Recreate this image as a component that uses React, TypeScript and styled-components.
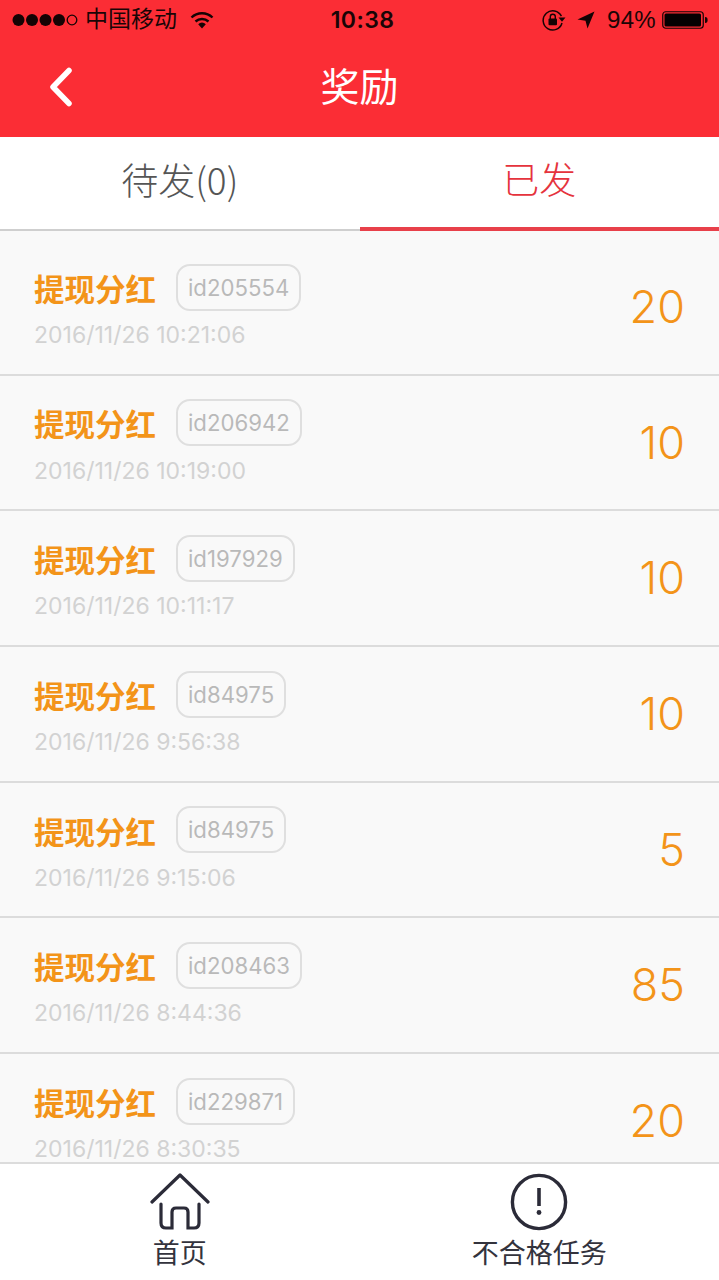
import React from "react";
import styled, { createGlobalStyle } from "styled-components";

const Global = createGlobalStyle`
  html, body { margin: 0; padding: 0; background: #fff; }
  body { font-family: "Liberation Sans", "Noto Sans CJK SC", sans-serif; }
  * { box-sizing: border-box; }
`;

const Page = styled.div`
  width: 719px;
  height: 1280px;
  display: flex;
  flex-direction: column;
  overflow: hidden;
  background: #fff;
`;
const Header = styled.header`
  height: 137px;
  flex: none;
  background: #fb2d35;
  display: flex;
  flex-direction: column;
`;
const StatusBar = styled.div`
  height: 40px;
  display: grid;
  grid-template-columns: 1fr auto 1fr;
  align-items: center;
  padding: 0 12px;
  color: #1a0506;
  font-size: 24px;
`;
const StatusLeft = styled.div`
  display: flex;
  align-items: center;
`;
const Carrier = styled.span`
  margin-left: 7px;
  font-size: 23px;
  line-height: 1;
  position: relative;
  top: -1px;
`;
const Clock = styled.span`
  font-family: "Inter", sans-serif;
  font-size: 23px;
  font-weight: 600;
  letter-spacing: 0.4px;
  margin-left: 6px;
`;
const StatusRight = styled.div`
  display: flex;
  align-items: center;
  justify-content: flex-end;
  gap: 11px;
  margin-right: -1px;
`;
const Percent = styled.span`
  font-size: 24px;
  letter-spacing: 0.3px;
  margin-left: 1px;
  margin-right: -5px;
`;
const NavBar = styled.div`
  flex: 1;
  display: grid;
  grid-template-columns: 1fr auto 1fr;
  align-items: center;
  padding: 0 48px 3px 48px;
`;
const Title = styled.h1`
  margin: 0;
  font-size: 39px;
  font-weight: 400;
  color: #fff;
  line-height: 1;
`;
const Tabs = styled.div`
  height: 94px;
  flex: none;
  display: grid;
  grid-template-columns: 1fr 1fr;
  background: #fff;
`;
const Tab = styled.div<{ $active?: boolean }>`
  display: flex;
  align-items: center;
  justify-content: center;
  padding-bottom: 9px;
  font-family: "Noto Sans CJK SC", sans-serif;
  font-size: 37px;
  font-weight: 300;
  color: ${(p) => (p.$active ? "#e5333d" : "#555")};
  border-bottom: ${(p) => (p.$active ? "4px solid #e8404a" : "2px solid #cfcfcf")};
`;
const List = styled.div`
  flex: 1;
  min-height: 0;
  overflow: hidden;
  background: #f9f9f9;
  padding-top: 9px;
`;
const Row = styled.div`
  height: 135.7px;
  display: flex;
  align-items: flex-start;
  justify-content: space-between;
  padding: 23px 35px 0 34px;
  border-bottom: 2px solid #dcdcdc;
`;
const RowMain = styled.div`
  display: flex;
  flex-direction: column;
`;
const RowTop = styled.div`
  display: flex;
  align-items: center;
  gap: 20px;
  height: 48px;
`;
const RowTitle = styled.span`
  font-size: 30.5px;
  font-weight: 700;
  color: #f39419;
  line-height: 1;
  position: relative;
  top: 3px;
`;
const Tag = styled.span`
  height: 47px;
  padding: 0 10px;
  display: flex;
  align-items: center;
  border: 2px solid #dfdfdf;
  border-radius: 14px;
  font-family: "Inter", sans-serif;
  font-size: 22.2px;
  color: #b9b9b9;
`;
const DateText = styled.div`
  margin-top: 10px;
  font-family: "Inter", sans-serif;
  font-size: 23px;
  line-height: 28px;
  color: #d2d2d2;
`;
const Amount = styled.div`
  font-family: "Inter", sans-serif;
  font-size: 45px;
  font-weight: 300;
  line-height: 1;
  margin-top: 21px;
  margin-right: -1px;
  color: #f39419;
`;
const TabBar = styled.nav`
  height: 118px;
  flex: none;
  display: grid;
  grid-template-columns: 1fr 1fr;
  background: #fff;
  border-top: 2px solid #dcdcdc;
`;
const TabItem = styled.div`
  display: flex;
  flex-direction: column;
  align-items: center;
  padding-top: 9px;
  gap: 5px;
  color: #33333d;
  font-size: 27px;
  line-height: 36px;
`;

const rows = [
  ["id205554", "2016/11/26 10:21:06", "20"],
  ["id206942", "2016/11/26 10:19:00", "10"],
  ["id197929", "2016/11/26 10:11:17", "10"],
  ["id84975", "2016/11/26 9:56:38", "10"],
  ["id84975", "2016/11/26 9:15:06", "5"],
  ["id208463", "2016/11/26 8:44:36", "85"],
  ["id229871", "2016/11/26 8:30:35", "20"],
];

const Signal = () => (
  <svg width="66" height="14" viewBox="0 0 66 14">
    {[6.5, 20, 33.5, 47].map((x) => (
      <circle key={x} cx={x} cy="7" r="6" fill="#150304" />
    ))}
    <circle cx="60" cy="7" r="4.8" fill="none" stroke="#150304" strokeWidth="1.3" />
  </svg>
);
const Wifi = () => (
  <svg width="24" height="18" viewBox="0 0 24 18" style={{ marginLeft: 13 }}>
    <path d="M1.5 6.5a15 15 0 0 1 21 0" fill="none" stroke="#150304" strokeWidth="2.4" />
    <path d="M5.5 10.5a9.5 9.5 0 0 1 13 0" fill="none" stroke="#150304" strokeWidth="2.4" />
    <path d="M8.2 13.2a5.3 5.3 0 0 1 7.6 0L12 17.5z" fill="#150304" />
  </svg>
);
const RotationLock = () => (
  <svg width="24" height="22" viewBox="0 0 24 22">
    <path d="M19.4 7.2A9.6 9.6 0 1 0 20 14" fill="none" stroke="#150304" strokeWidth="1.5" />
    <path d="M16.5 8.5h7l-3.5 4.2z" fill="#150304" />
    <rect x="6.5" y="9.6" width="8.5" height="6.6" rx="1" fill="#150304" />
    <path d="M8.3 10V7.8a2.5 2.5 0 0 1 5 0V10" fill="none" stroke="#150304" strokeWidth="1.4" />
  </svg>
);
const Location = () => (
  <svg width="18" height="18" viewBox="0 0 18 18">
    <path d="M17.5 0.5 L0.5 8.5 L8.5 9.8 L10.5 17.5 Z" fill="#150304" />
  </svg>
);
const Battery = () => (
  <svg width="46" height="20" viewBox="0 0 46 20">
    <rect x="0.75" y="1.75" width="40.5" height="16.5" rx="3" fill="none" stroke="#150304" strokeWidth="1.2" />
    <rect x="2.5" y="3.5" width="36.5" height="13" rx="1.5" fill="#050001" />
    <path d="M43 7c2 0 2.6 1.2 2.6 3S45 13 43 13z" fill="#150304" />
  </svg>
);
const Back = () => (
  <svg width="26" height="40" viewBox="0 0 26 40">
    <path d="M21 3.5 L5 20 L21 36.5" fill="none" stroke="#fff" strokeWidth="5.5" strokeLinecap="round" strokeLinejoin="round" />
  </svg>
);
const HomeIcon = () => (
  <svg width="60" height="58" viewBox="0 0 60 58">
    <path d="M2 29 L30 2 L58 29" fill="none" stroke="#2b2b38" strokeWidth="3.2" strokeLinecap="round" strokeLinejoin="round" />
    <path
      d="M11 31 V50 Q11 55 16 55 H22 V39 Q22 35 26 35 H34 Q38 35 38 39 V55 H44 Q49 55 49 50 V31"
      fill="none"
      stroke="#2b2b38"
      strokeWidth="3.2"
      strokeLinecap="round"
    />
  </svg>
);
const AlertIcon = () => (
  <svg width="58" height="58" viewBox="0 0 58 58">
    <circle cx="29" cy="29" r="26.6" fill="none" stroke="#2b2b38" strokeWidth="3.4" />
    <path d="M29 15 V33" stroke="#2b2b38" strokeWidth="3.6" />
    <circle cx="29" cy="39.5" r="2.4" fill="#2b2b38" />
  </svg>
);

export default function App() {
  return (
    <Page>
      <Global />
      <Header>
        <StatusBar>
          <StatusLeft>
            <Signal />
            <Carrier>中国移动</Carrier>
            <Wifi />
          </StatusLeft>
          <Clock>10:38</Clock>
          <StatusRight>
            <RotationLock />
            <Location />
            <Percent>94%</Percent>
            <Battery />
          </StatusRight>
        </StatusBar>
        <NavBar>
          <Back />
          <Title>奖励</Title>
          <span />
        </NavBar>
      </Header>
      <Tabs>
        <Tab>待发(0)</Tab>
        <Tab $active>已发</Tab>
      </Tabs>
      <List>
        {rows.map(([id, date, amount], i) => (
          <Row key={i}>
            <RowMain>
              <RowTop>
                <RowTitle>提现分红</RowTitle>
                <Tag>{id}</Tag>
              </RowTop>
              <DateText>{date}</DateText>
            </RowMain>
            <Amount>{amount}</Amount>
          </Row>
        ))}
      </List>
      <TabBar>
        <TabItem>
          <HomeIcon />
          <span>首页</span>
        </TabItem>
        <TabItem>
          <AlertIcon />
          <span>不合格任务</span>
        </TabItem>
      </TabBar>
    </Page>
  );
}
